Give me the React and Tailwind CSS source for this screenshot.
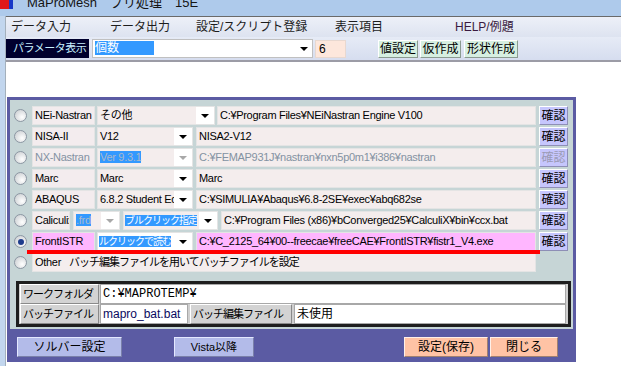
import React from "react";

const Arrow = ({ gray }) => (
  <svg width="8" height="4" viewBox="0 0 8 4">
    <path d="M0 0h8L4 4z" fill={gray ? "#a8a8a8" : "#000"} />
  </svg>
);

const Radio = ({ checked }) => (
  <div className="w-[13px] h-[13px] shrink-0 rounded-full border border-[#8c97a3] bg-[radial-gradient(circle_at_65%_65%,#ffffff,#c4c8cc)] flex items-center justify-center">
    {checked && <div className="w-[6px] h-[6px] rounded-full bg-[#1d3c8c]" />}
  </div>
);

const Cell = ({ className = "", children }) => (
  <div className={`h-full border border-[#e4e4e4] px-[2px] leading-[17px] whitespace-nowrap overflow-hidden ${className}`}>
    {children}
  </div>
);

const Combo = ({ className = "", text, sel, gray, white, jp }) => (
  <div className={`h-full flex border border-[#e4e4e4] bg-white shrink-0 ${className}`}>
    <div className={`flex-1 overflow-hidden whitespace-nowrap leading-[17px] ${jp ? "pl-[1px] text-[10px] tracking-[-1px]" : "px-[2px]"} ${white ? "bg-white" : "bg-[#f4eded]"}`}>
      {sel ? (
        <span className={`bg-[#3399ff] ${gray ? "text-[#a9b8cc]" : "text-white"}`}>{text}</span>
      ) : (
        <span className={gray ? "text-[#8a96a4]" : ""}>{text}</span>
      )}
    </div>
    <div className="w-[18px] flex items-center justify-center">
      <Arrow gray={gray} />
    </div>
  </div>
);

const Confirm = ({ gray }) => (
  <div className={`w-[29px] h-full shrink-0 ml-[3px] bg-[#c6c6fd] border-t border-l border-white border-b border-r border-b-[#8e8eb6] border-r-[#8e8eb6] flex items-center justify-center text-[12px] tracking-normal ${gray ? "text-[#9a9ab4]" : "text-black"}`}>
    確認
  </div>
);

const Row = ({ checked, children }) => (
  <div className="h-[19px] flex items-center pl-[4px] pr-[5px] tracking-[-0.3px]">
    <Radio checked={checked} />
    <div className="flex-1 h-full flex items-center ml-[5px]">{children}</div>
  </div>
);

const Label = ({ className = "", children }) => (
  <div className={`h-full bg-[#d3d3d3] border-t border-l border-white border-b border-r border-b-[#8a8a8a] border-r-[#8a8a8a] px-[2px] leading-[18px] tracking-[-1px] whitespace-nowrap overflow-hidden ${className}`}>
    {children}
  </div>
);

const Value = ({ className = "", children }) => (
  <div className={`h-full bg-white border border-[#a8a8a8] px-[2px] leading-[18px] whitespace-nowrap overflow-hidden ${className}`}>
    {children}
  </div>
);

export default function App() {
  const menus = [
    { label: "データ入力", w: "w-[99px]" },
    { label: "データ出力", w: "w-[86px]" },
    { label: "設定/スクリプト登録", w: "w-[139px]" },
    { label: "表示項目", w: "w-[120px]" },
  ];

  return (
    <div className="w-[621px] h-[366px] overflow-hidden bg-white relative text-[11px] text-black font-['Liberation_Sans','Noto_Sans_CJK_JP',sans-serif]">
      {/* title bar */}
      <div className="h-[16px] bg-[#aecaeb] flex items-start overflow-hidden">
        <div className="flex h-[9px]">
          <div className="w-[9px] bg-[#e01818]" />
          <div className="w-[4px] bg-[#1838c8]" />
        </div>
        <div className="ml-[14px] -mt-[5px] text-[13px] leading-[15px] text-[#151515] whitespace-pre">MaProMesh　プリ処理　15E</div>
      </div>

      <div className="flex h-[350px]">
        <div className="w-[6px] bg-[#c2d6ee] border-r border-[#a4b0bc]" />
        <div className="flex-1 flex flex-col">
          {/* menu */}
          <div className="h-[21px] border-t border-[#6a6a6a] bg-[linear-gradient(#edf0f8,#dde3f0)] flex items-center pl-[5px] text-[12px] text-[#1c1c1c]">
            {menus.map((m) => (
              <div key={m.label} className={`${m.w} whitespace-nowrap`}>{m.label}</div>
            ))}
            <div className="text-[#3a1a40]">HELP/例題</div>
          </div>

          {/* toolbar */}
          <div className="h-[25px] bg-[linear-gradient(#e6ebf6,#d6ddef)] border-b-2 border-[#9c9ca6] flex items-start pt-[2px]">
            <div className="w-[83px] h-[19px] bg-[#00002e] text-[#c6f0ff] leading-[19px] pl-[7px] tracking-[-0.5px] whitespace-nowrap overflow-hidden">パラメータ表示</div>
            <div className="ml-[3px] w-[221px] h-[19px] bg-white border border-[#c0c0c0] flex">
              <div className="flex-1 pl-[2px] leading-[17px] text-[12px]">
                <span className="bg-[#3399ff] text-white pr-[35px]">個数</span>
              </div>
              <div className="w-[16px] flex items-center justify-center"><Arrow /></div>
            </div>
            <div className="ml-[2px] w-[31px] h-[18px] mt-[1px] bg-[#fde7dc] border border-[#e8d8d0] pl-[3px] leading-[16px] text-[12px]">6</div>
            {[
              ["値設定", "ml-[32px] w-[40px]"],
              ["仮作成", "ml-[2px] w-[41px]"],
              ["形状作成", "ml-[3px] w-[54px]"],
            ].map(([t, c]) => (
              <div key={t} className={`${c} h-[18px] mt-[1px] bg-[#d6efe1] border-t border-l border-white border-b border-r border-b-[#8a9a90] border-r-[#8a9a90] text-[12px] leading-[16px] text-center whitespace-nowrap`}>{t}</div>
            ))}
          </div>

          {/* solver panel */}
          <div className="mt-[35px] ml-[1px] w-[569px] h-[265px] bg-[#5b5ba3] pt-[3px] px-[3px] flex flex-col">
            <div className="h-[229px] bg-[#c6d5d6] flex flex-col pt-[6px]">
              <div className="flex flex-col gap-[2px]">
                <Row>
                  <Cell className="w-[63px] bg-[#f3ecee]">NEi-Nastran</Cell>
                  <Combo className="ml-[2px] w-[118px]" text="その他" />
                  <Cell className="ml-[2px] flex-1 bg-[#f4eded]">C:¥Program Files¥NEiNastran Engine V100</Cell>
                  <Confirm />
                </Row>
                <Row>
                  <Cell className="w-[63px] bg-[#f3ecee]">NISA-II</Cell>
                  <Combo className="ml-[2px] w-[96px]" text="V12" />
                  <Cell className="ml-[3px] flex-1 bg-[#f4eded]">NISA2-V12</Cell>
                  <Confirm />
                </Row>
                <Row>
                  <Cell className="w-[63px] bg-[#f3ecee] text-[#8392a2]">NX-Nastran</Cell>
                  <Combo className="ml-[2px] w-[96px]" text="Ver 9.3.1" sel gray />
                  <Cell className="ml-[3px] flex-1 bg-[#f4eded] text-[#8392a2]">C:¥FEMAP931J¥nastran¥nxn5p0m1¥i386¥nastran</Cell>
                  <Confirm gray />
                </Row>
                <Row>
                  <Cell className="w-[63px] bg-[#f3ecee]">Marc</Cell>
                  <Combo className="ml-[2px] w-[96px]" text="Marc" />
                  <Cell className="ml-[3px] flex-1 bg-[#f4eded]">Marc</Cell>
                  <Confirm />
                </Row>
                <Row>
                  <Cell className="w-[63px] bg-[#f3ecee]">ABAQUS</Cell>
                  <Combo className="ml-[2px] w-[96px]" text="6.8.2 Student Edition" />
                  <Cell className="ml-[3px] flex-1 bg-[#f4eded]">C:¥SIMULIA¥Abaqus¥6.8-2SE¥exec¥abq682se</Cell>
                  <Confirm />
                </Row>
                <Row>
                  <Cell className="w-[38px] bg-[#f3ecee]">Caliculix</Cell>
                  <Combo className="ml-[3px] w-[47px]" text=".frd" sel gray />
                  <Combo className="ml-[3px] w-[95px]" text="ブルクリック指定" sel jp />
                  <Cell className="ml-[3px] flex-1 bg-[#f4eded]">C:¥Program Files (x86)¥bConverged25¥CalculiX¥bin¥ccx.bat</Cell>
                  <Confirm />
                </Row>
                <Row checked>
                  <Cell className="w-[63px] bg-[#ffb6ff]">FrontISTR</Cell>
                  <Combo className="ml-[2px] w-[96px]" text="ルクリックで読む" sel white jp />
                  <Cell className="ml-[3px] flex-1 bg-[#ffb6ff]">C:¥C_2125_64¥00--freecae¥freeCAE¥FrontISTR¥fistr1_V4.exe</Cell>
                  <Confirm />
                </Row>
                <Row>
                  <Cell className="flex-1 bg-[#f4eded] mr-[32px]">
                    Other<span className="ml-[8px] tracking-[-1px]">バッチ編集ファイルを用いてバッチファイルを設定</span>
                  </Cell>
                </Row>
              </div>

              {/* folders */}
              <div className="mt-[9px] ml-[6px] w-[555px] h-[46px] border-[3px] border-[#1e1e1e] bg-[#cfcfcf] flex flex-col">
                <div className="h-[20px] flex">
                  <Label className="ml-[1px] w-[79px]">ワークフォルダ</Label>
                  <Value className="ml-[1px] flex-1 mr-[2px] font-['Liberation_Mono','Noto_Sans_CJK_JP',monospace] text-[12px]">C:¥MAPROTEMP¥</Value>
                </div>
                <div className="h-[20px] flex">
                  <Label className="ml-[1px] w-[79px]">バッチファイル</Label>
                  <Value className="ml-[1px] w-[88px] text-[#0a0a60] text-[12px]">mapro_bat.bat</Value>
                  <Label className="ml-[2px] w-[102px]">バッチ編集ファイル</Label>
                  <Value className="ml-[2px] flex-1 mr-[2px] text-[12px]">未使用</Value>
                </div>
              </div>
            </div>

            {/* footer buttons */}
            <div className="flex pt-[8px] text-[12px]">
              <div className="ml-[7px] w-[105px] h-[20px] bg-[#b3bbe9] border-t border-l border-[#e4e8ff] border-b border-r border-b-[#7a80aa] border-r-[#7a80aa] leading-[18px] text-center">ソルバー設定</div>
              <div className="ml-[52px] w-[80px] h-[20px] bg-[#b3bbe9] border-t border-l border-[#e4e8ff] border-b border-r border-b-[#7a80aa] border-r-[#7a80aa] leading-[18px] text-center text-[11px]">Vista以降</div>
              <div className="ml-[150px] w-[84px] h-[20px] bg-[#ffc3a5] border-t border-l border-[#fff0e8] border-b border-r border-b-[#a08070] border-r-[#a08070] leading-[18px] text-center">設定(保存)</div>
              <div className="ml-[2px] w-[68px] h-[20px] bg-[#ffc3a5] border-t border-l border-[#fff0e8] border-b border-r border-b-[#a08070] border-r-[#a08070] leading-[18px] text-center">閉じる</div>
            </div>
          </div>
        </div>
      </div>

      {/* red annotation line */}
      <div className="absolute left-[27px] top-[250px] w-[513px] h-[4px] bg-[#ff0000]" />
    </div>
  );
}
